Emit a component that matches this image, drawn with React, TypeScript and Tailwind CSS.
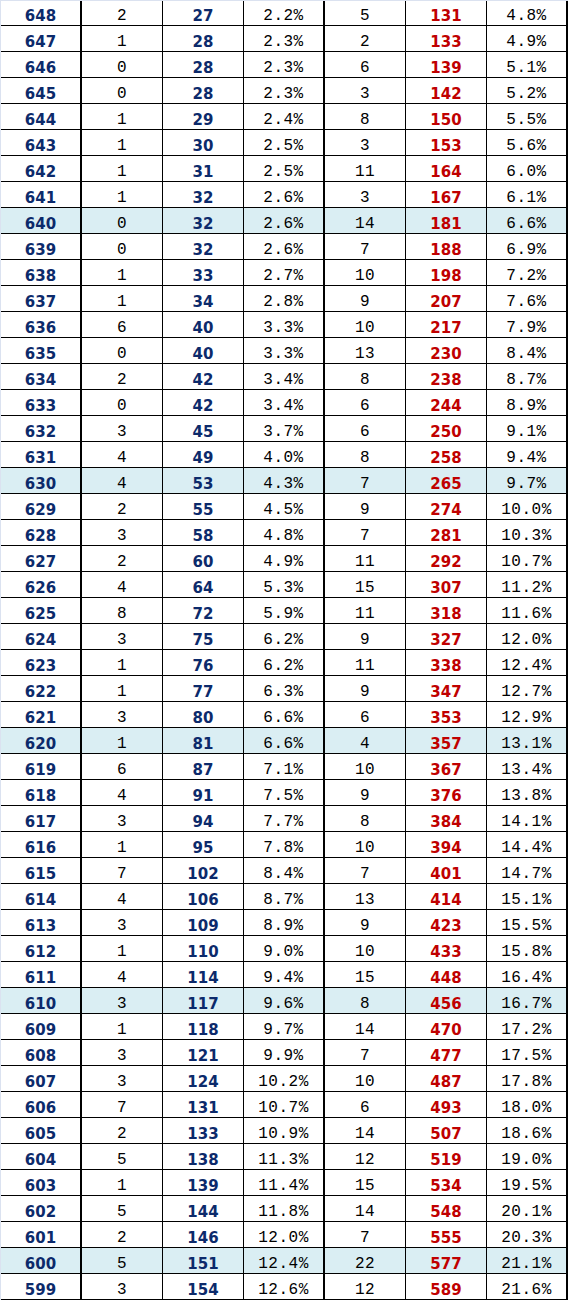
import React from "react";

const raw = `648 2 27 2.2% 5 131 4.8%
647 1 28 2.3% 2 133 4.9%
646 0 28 2.3% 6 139 5.1%
645 0 28 2.3% 3 142 5.2%
644 1 29 2.4% 8 150 5.5%
643 1 30 2.5% 3 153 5.6%
642 1 31 2.5% 11 164 6.0%
641 1 32 2.6% 3 167 6.1%
640 0 32 2.6% 14 181 6.6%
639 0 32 2.6% 7 188 6.9%
638 1 33 2.7% 10 198 7.2%
637 1 34 2.8% 9 207 7.6%
636 6 40 3.3% 10 217 7.9%
635 0 40 3.3% 13 230 8.4%
634 2 42 3.4% 8 238 8.7%
633 0 42 3.4% 6 244 8.9%
632 3 45 3.7% 6 250 9.1%
631 4 49 4.0% 8 258 9.4%
630 4 53 4.3% 7 265 9.7%
629 2 55 4.5% 9 274 10.0%
628 3 58 4.8% 7 281 10.3%
627 2 60 4.9% 11 292 10.7%
626 4 64 5.3% 15 307 11.2%
625 8 72 5.9% 11 318 11.6%
624 3 75 6.2% 9 327 12.0%
623 1 76 6.2% 11 338 12.4%
622 1 77 6.3% 9 347 12.7%
621 3 80 6.6% 6 353 12.9%
620 1 81 6.6% 4 357 13.1%
619 6 87 7.1% 10 367 13.4%
618 4 91 7.5% 9 376 13.8%
617 3 94 7.7% 8 384 14.1%
616 1 95 7.8% 10 394 14.4%
615 7 102 8.4% 7 401 14.7%
614 4 106 8.7% 13 414 15.1%
613 3 109 8.9% 9 423 15.5%
612 1 110 9.0% 10 433 15.8%
611 4 114 9.4% 15 448 16.4%
610 3 117 9.6% 8 456 16.7%
609 1 118 9.7% 14 470 17.2%
608 3 121 9.9% 7 477 17.5%
607 3 124 10.2% 10 487 17.8%
606 7 131 10.7% 6 493 18.0%
605 2 133 10.9% 14 507 18.6%
604 5 138 11.3% 12 519 19.0%
603 1 139 11.4% 15 534 19.5%
602 5 144 11.8% 14 548 20.1%
601 2 146 12.0% 7 555 20.3%
600 5 151 12.4% 22 577 21.1%
599 3 154 12.6% 12 589 21.6%`;

const rows = raw.split("\n").map((l) => l.trim().split(" "));

const boldNavy =
  "font-['DejaVu_Sans',sans-serif] font-bold text-[15px] text-[#0c2a6b] pb-[1px]";
const boldRed =
  "font-['DejaVu_Sans',sans-serif] font-bold text-[15px] text-[#c00000] pb-[1px]";
const regular =
  "font-['Liberation_Mono',monospace] text-[16px] text-black tracking-[0.5px] pb-[1px]";

function Cell({
  children,
  thick,
  cls,
}: {
  children: React.ReactNode;
  thick?: boolean;
  cls: string;
}) {
  return (
    <div
      className={
        "w-[81px] shrink-0 h-full flex items-end justify-center leading-none border-black " +
        (thick ? "border-r-2 " : "border-r ") +
        cls
      }
    >
      {children}
    </div>
  );
}

export default function App() {
  return (
    <div className="w-[568px] bg-[#dbe2f0] pt-[1px] pl-[1px]">
      {rows.map((r, i) => {
        const hl = Number(r[0]) % 10 === 0;
        return (
          <div
            key={r[0]}
            className={
              "flex border-b border-black " +
              (i === 0 ? "h-[25px] " : "h-[26px] ") +
              (hl ? "bg-[#daeef3]" : "bg-white")
            }
          >
            <Cell thick cls={boldNavy}>{r[0]}</Cell>
            <Cell cls={regular}>{r[1]}</Cell>
            <Cell cls={boldNavy}>{r[2]}</Cell>
            <Cell thick cls={regular}>{r[3]}</Cell>
            <Cell cls={regular}>{r[4]}</Cell>
            <Cell cls={boldRed}>{r[5]}</Cell>
            <Cell thick cls={regular}>{r[6]}</Cell>
          </div>
        );
      })}
    </div>
  );
}
